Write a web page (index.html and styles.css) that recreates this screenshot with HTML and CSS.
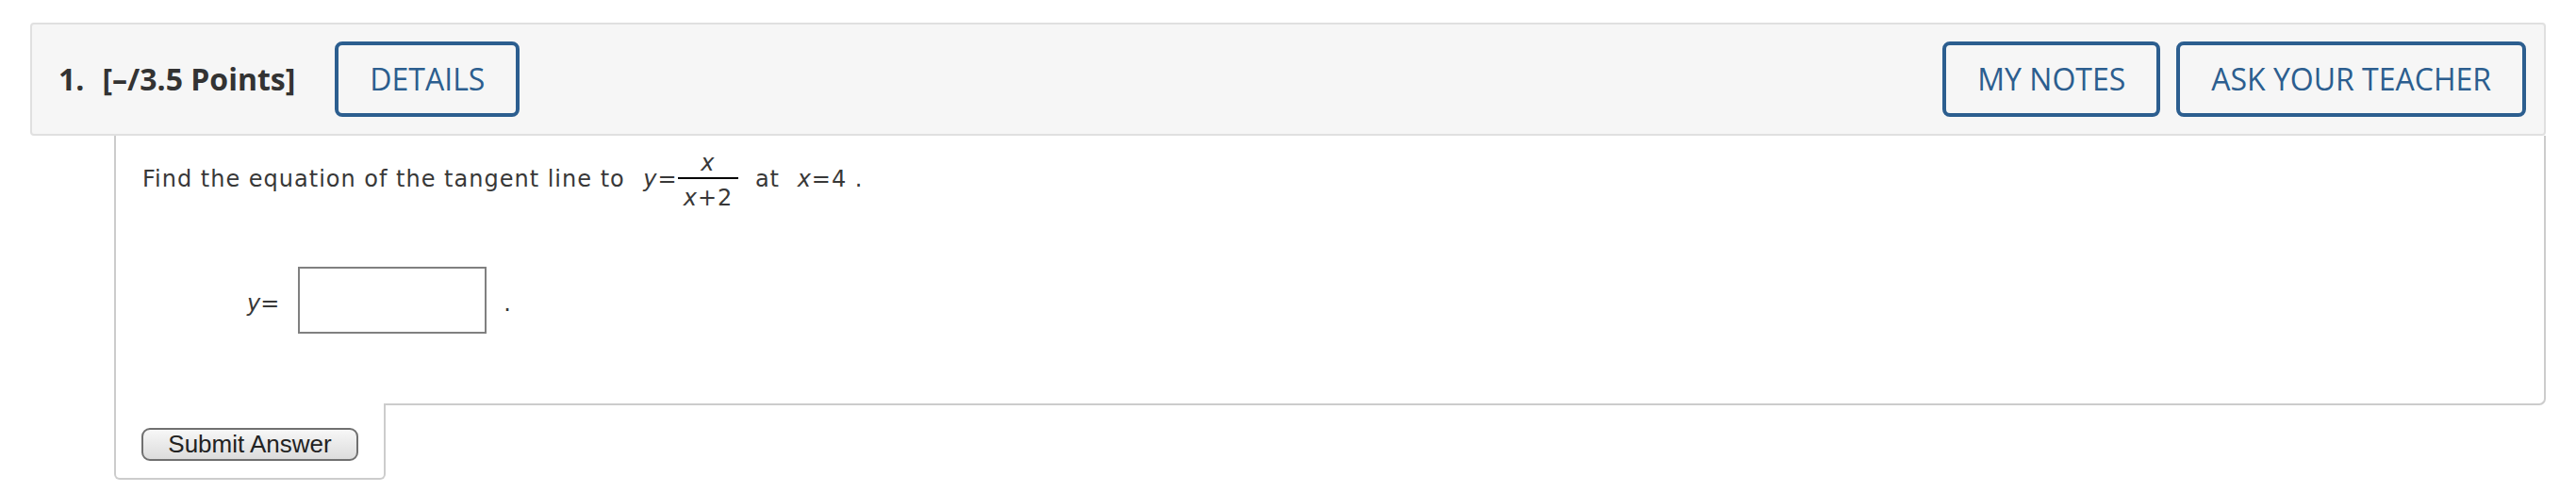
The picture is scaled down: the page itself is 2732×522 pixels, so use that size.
FILE: index.html
```html
<!DOCTYPE html>
<html lang="en">
<head>
<meta charset="utf-8">
<title>Question 1</title>
<link rel="stylesheet" href="styles.css">
</head>
<body>
<div class="question">
  <div class="q-header">
    <span class="q-num">1.</span>
    <span class="q-points">[–/3.5 Points]</span>
    <button class="hbtn details">DETAILS</button>
    <div class="h-right">
      <button class="hbtn">MY NOTES</button>
      <button class="hbtn">ASK YOUR TEACHER</button>
    </div>
  </div>
  <div class="q-body">
    <div class="q-main">
      <p class="q-text">Find the equation of the tangent line to <span class="math m1"><i>y</i>=<span class="frac"><span class="num"><i>x</i></span><span class="bar"></span><span class="den"><i>x</i>+2</span></span></span> at <span class="math m2"><i>x</i>=4</span> .</p>
      <div class="answer-row">
        <span class="ans-label"><i>y</i>=</span>
        <span class="ans-input"></span>
        <span class="ans-dot">.</span>
      </div>
    </div>
    <div class="q-submit">
      <button class="submit">Submit Answer</button>
    </div>
  </div>
</div>
</body>
</html>
```

FILE: styles.css
```css
html, body {
  margin: 0;
  padding: 0;
  background: #ffffff;
}

body {
  padding: 24px 32px;
}

.q-header {
  display: flex;
  align-items: center;
  height: 120px;
  box-sizing: border-box;
  padding: 0 19px 0 28px;
  background: #f6f6f6;
  border: 2px solid #e0e0e0;
  border-radius: 4px;
  font-family: "Open Sans", sans-serif;
  color: #333333;
}

.q-num,
.q-points {
  font-size: 32px;
  font-weight: 700;
  line-height: 48px;
}

.q-points {
  margin-left: 19px;
}

.hbtn {
  box-sizing: border-box;
  height: 80px;
  padding: 0 33px;
  border: 4px solid #2c5e8f;
  border-radius: 8px;
  background: #f6f6f6;
  color: #2c5e8f;
  font-family: "Open Sans", sans-serif;
  font-size: 32px;
  font-weight: 500;
  line-height: 48px;
  white-space: nowrap;
}

.details {
  margin-left: 42px;
}

.h-right {
  margin-left: auto;
  display: flex;
  gap: 17px;
}

.q-body {
  margin-left: 89px;
  font-family: "DejaVu Sans", Verdana, sans-serif;
  color: #383838;
}

.q-main {
  border: 2px solid #cccccc;
  border-top: 0;
  border-bottom-right-radius: 7px;
  padding: 18px 28px 74px 28px;
}

.q-text {
  margin: 0;
  font-size: 24px;
  line-height: 36px;
  letter-spacing: 1px;
}

.math {
  font-size: 24px;
}

.m1 {
  margin-left: 11px;
}

.m2 {
  margin-left: 10px;
}

.frac {
  display: inline-flex;
  flex-direction: column;
  align-items: center;
  vertical-align: 17px;
  margin-right: 9px;
}

.num {
  line-height: 22px;
  padding: 0 6px 4px;
}

.bar {
  align-self: stretch;
  height: 2px;
  background: #000000;
}

.den {
  line-height: 22px;
  padding: 9px 6px 0;
}

.answer-row {
  display: flex;
  align-items: center;
  margin-top: 62px;
  font-size: 24px;
  line-height: 36px;
}

.ans-label {
  margin-left: 111px;
  padding-top: 7px;
}

.ans-input {
  box-sizing: border-box;
  width: 200px;
  height: 71px;
  margin-left: 20px;
  border: 2px solid #808080;
  background: #ffffff;
}

.ans-dot {
  margin-left: 18px;
  padding-top: 7px;
}

.q-submit {
  width: 230px;
  margin-top: -2px;
  padding: 26px 27px 18px 27px;
  background: #ffffff;
  border: 2px solid #cccccc;
  border-top: 0;
  border-radius: 0 0 6px 6px;
}

.submit {
  display: block;
  box-sizing: border-box;
  width: 230px;
  height: 35px;
  padding: 0;
  border: 2px solid #707070;
  border-radius: 9px;
  background: linear-gradient(#f7f7f7, #dcdcdc);
  color: #222222;
  font-family: "Liberation Sans", Arial, sans-serif;
  font-size: 26px;
  line-height: 31px;
}
```
